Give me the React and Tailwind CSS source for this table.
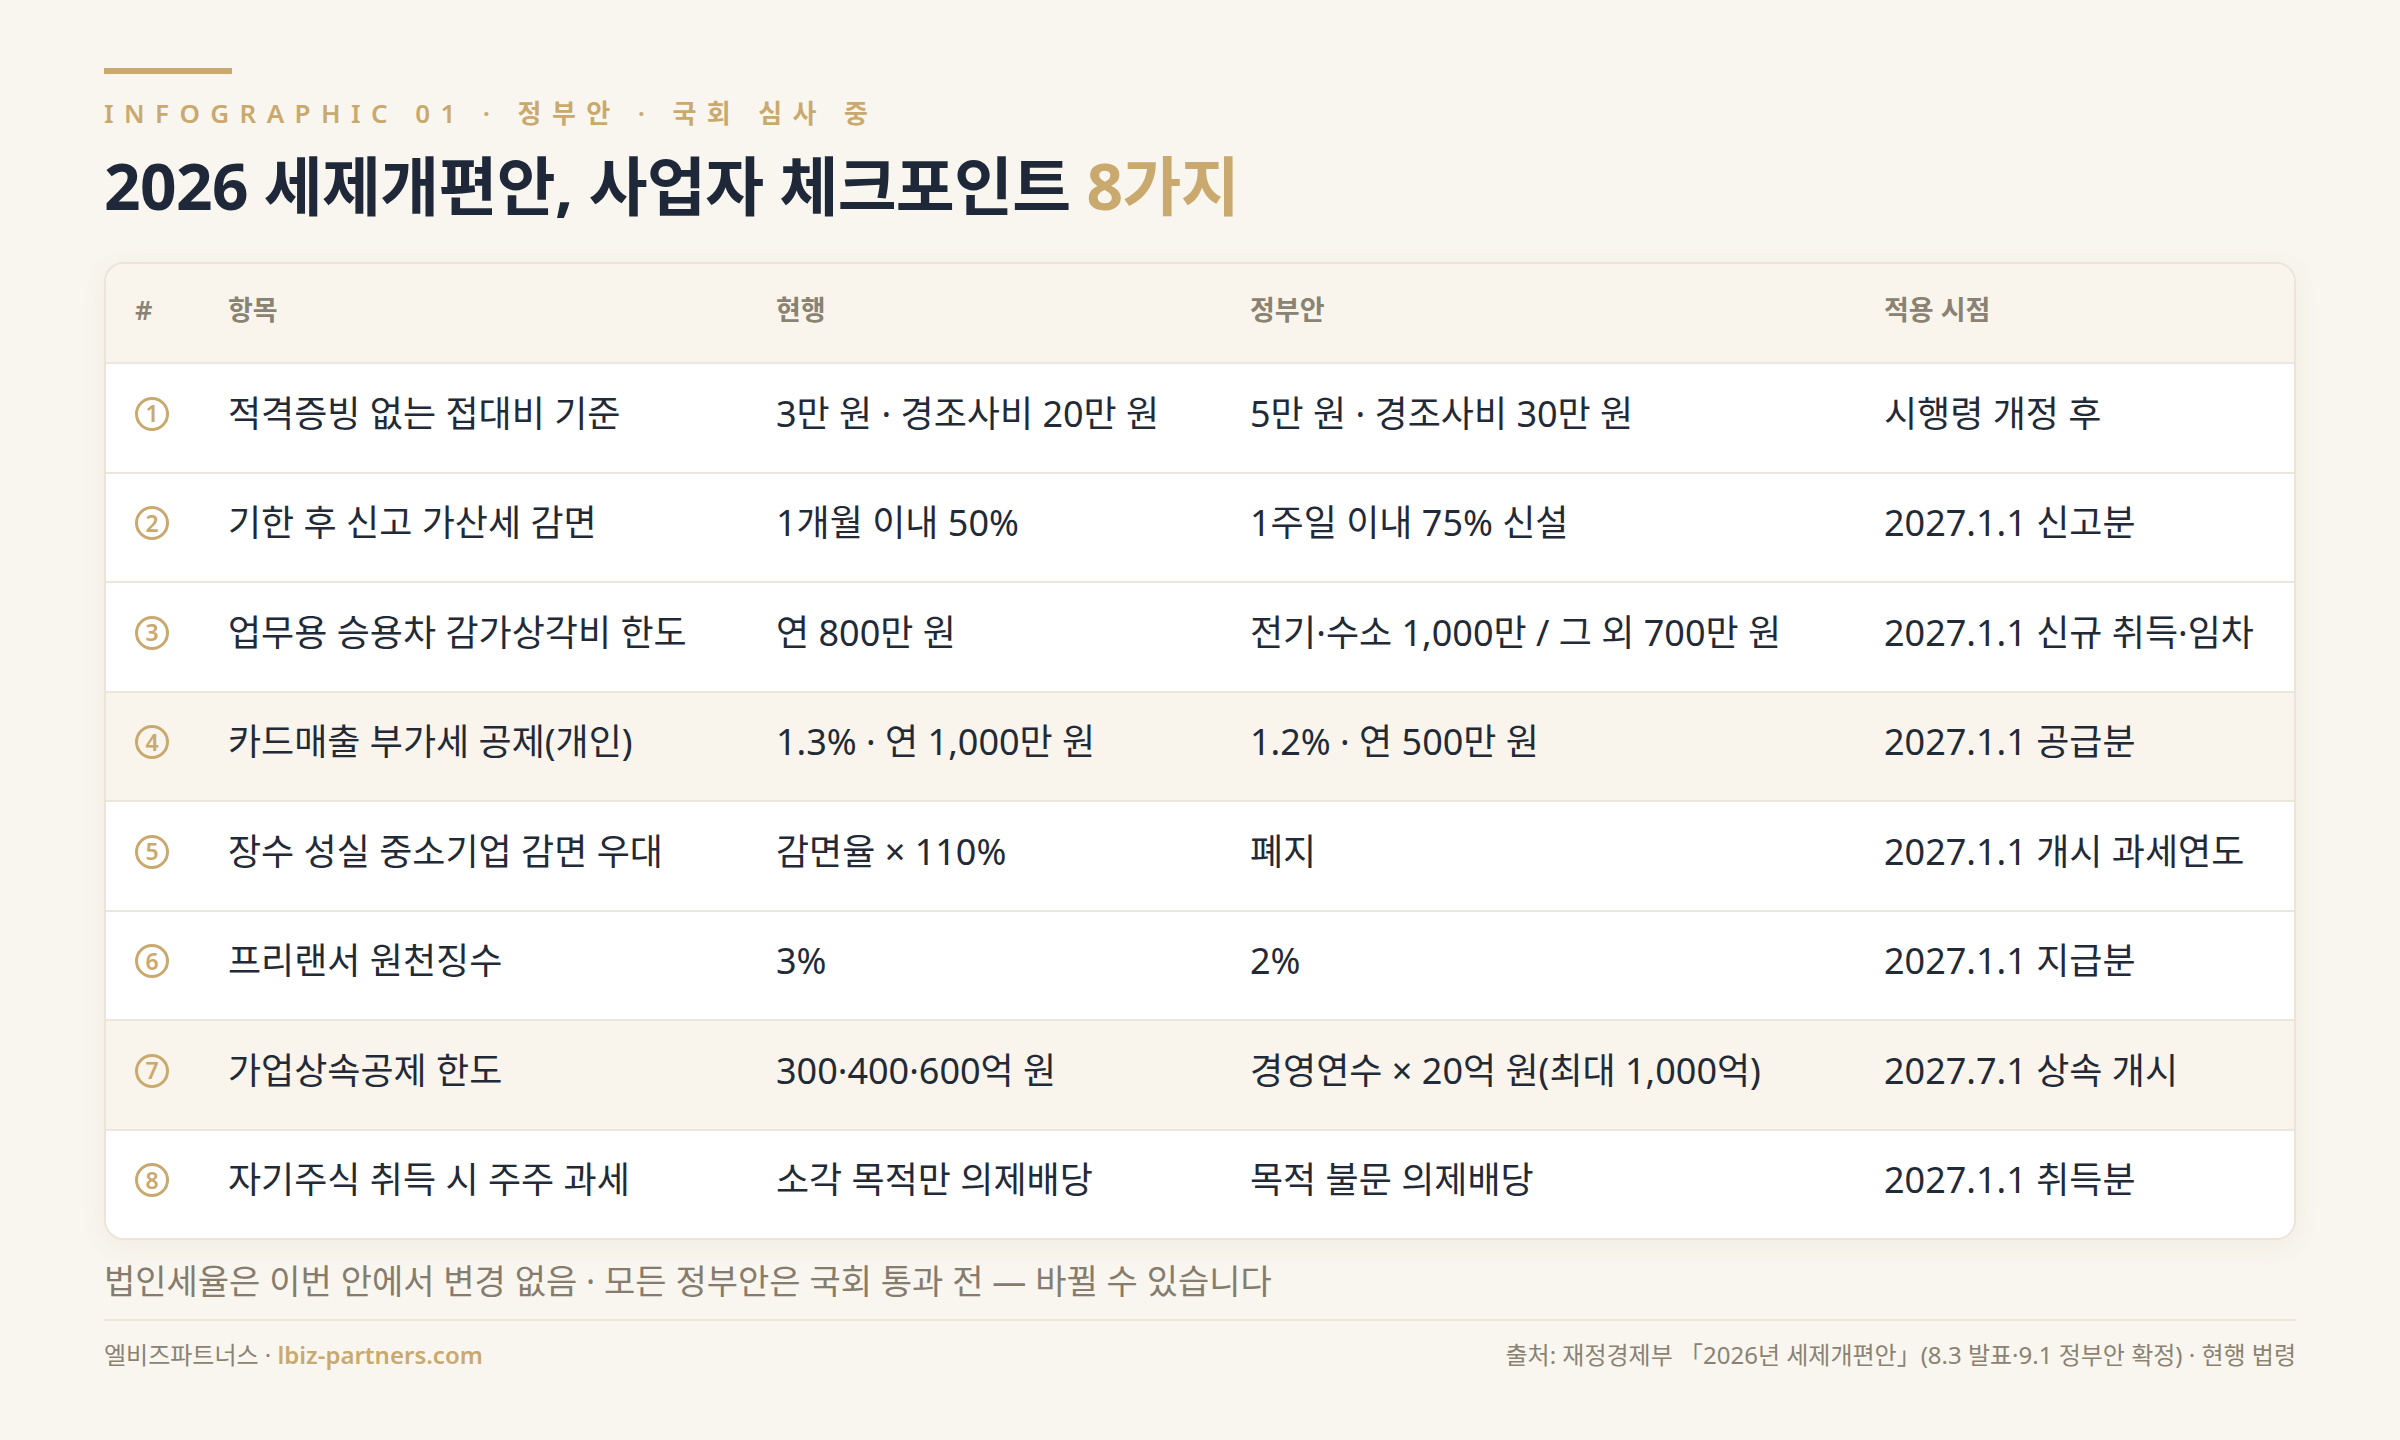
const rows = [
  { n: "1", item: "적격증빙 없는 접대비 기준", cur: "3만 원 · 경조사비 20만 원", gov: "5만 원 · 경조사비 30만 원", when: "시행령 개정 후" },
  { n: "2", item: "기한 후 신고 가산세 감면", cur: "1개월 이내 50%", gov: "1주일 이내 75% 신설", when: "2027.1.1 신고분" },
  { n: "3", item: "업무용 승용차 감가상각비 한도", cur: "연 800만 원", gov: "전기·수소 1,000만 / 그 외 700만 원", when: "2027.1.1 신규 취득·임차" },
  { n: "4", item: "카드매출 부가세 공제(개인)", cur: "1.3% · 연 1,000만 원", gov: "1.2% · 연 500만 원", when: "2027.1.1 공급분", hl: true },
  { n: "5", item: "장수 성실 중소기업 감면 우대", cur: "감면율 × 110%", gov: "폐지", when: "2027.1.1 개시 과세연도" },
  { n: "6", item: "프리랜서 원천징수", cur: "3%", gov: "2%", when: "2027.1.1 지급분" },
  { n: "7", item: "가업상속공제 한도", cur: "300·400·600억 원", gov: "경영연수 × 20억 원(최대 1,000억)", when: "2027.7.1 상속 개시", hl: true },
  { n: "8", item: "자기주식 취득 시 주주 과세", cur: "소각 목적만 의제배당", gov: "목적 불문 의제배당", when: "2027.1.1 취득분" },
];

export default function App() {
  return (
    <div className="w-[2400px] h-[1440px] bg-[#f9f6ef] px-[104px] pt-[68px] font-['Noto_Sans','Noto_Sans_CJK_KR',sans-serif] text-[#222a38]">
      <div className="h-[6px] w-[128px] bg-[#c9a96e]" />
      <div className="mt-[26px] text-[26px] leading-none tracking-[0.4em] text-[#c9a96e] font-semibold">
        INFOGRAPHIC 01 · 정부안 · 국회 심사 중
      </div>
      <h1 className="mt-[28px] text-[64px] leading-none font-bold tracking-[-0.01em] text-[#1f2838]">
        2026 세제개편안, 사업자 체크포인트 <span className="text-[#c9a96e]">8가지</span>
      </h1>

      <div className="mt-[44px] rounded-[20px] border-2 border-[#ece4d8] bg-white overflow-hidden shadow-[0_6px_24px_rgba(120,100,60,0.07)]">
        <div className="grid grid-cols-[93px_548px_474px_634px_1fr] pl-[29px] pb-[5px] h-[98px] items-center bg-[#f9f5ec] text-[27px] font-semibold text-[#8a8273]">
          <div>#</div>
          <div>항목</div>
          <div>현행</div>
          <div>정부안</div>
          <div>적용 시점</div>
        </div>
        {rows.map((r) => (
          <div
            key={r.n}
            className={
              "grid grid-cols-[93px_548px_474px_634px_1fr] pl-[29px] pb-[8px] h-[109.5px] items-center border-t-2 border-[#ede6da] text-[36px] " +
              (r.hl ? "bg-[#f9f5ec]" : "bg-white")
            }
          >
            <div>
              <div className="w-[34px] h-[34px] rounded-full border-[3px] border-[#c9a96e] flex items-center justify-center text-[23px] leading-none font-semibold text-[#c9a96e]">
                {r.n}
              </div>
            </div>
            <div>{r.item}</div>
            <div>{r.cur}</div>
            <div>{r.gov}</div>
            <div>{r.when}</div>
          </div>
        ))}
      </div>

      <div className="mt-[24px] text-[34px] leading-none text-[#857c6e]">
        법인세율은 이번 안에서 변경 없음 · 모든 정부안은 국회 통과 전 — 바뀔 수 있습니다
      </div>
      <div className="mt-[21px] h-[2px] bg-[#ede6da]" />
      <div className="mt-[22px] flex justify-between text-[24px] leading-none text-[#8a8273]">
        <div>
          엘비즈파트너스 · <span className="text-[#c9a96e] font-semibold">lbiz-partners.com</span>
        </div>
        <div>출처: 재정경제부 「2026년 세제개편안」(8.3 발표·9.1 정부안 확정) · 현행 법령</div>
      </div>
    </div>
  );
}
